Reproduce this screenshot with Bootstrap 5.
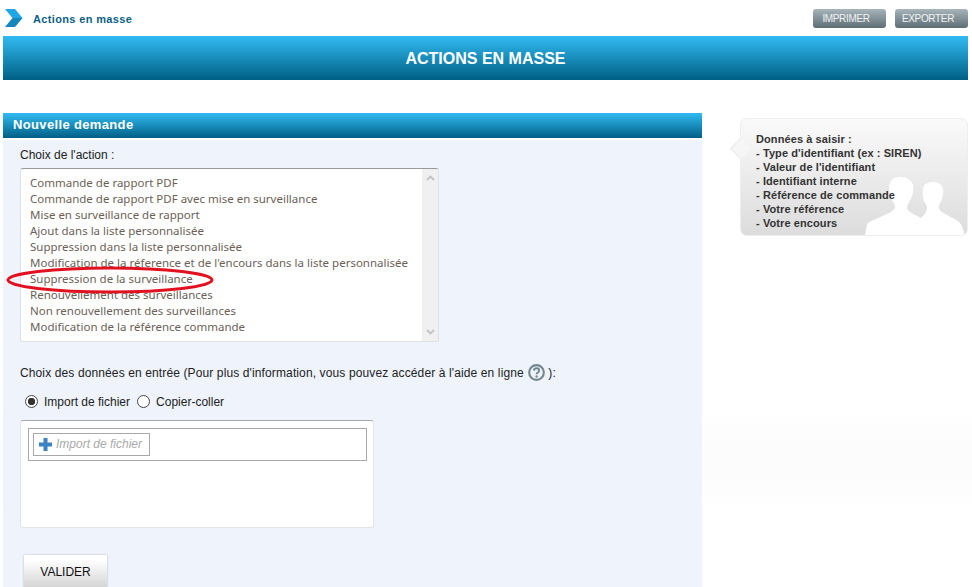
<!DOCTYPE html>
<html lang="fr">
<head>
<meta charset="utf-8">
<title>Actions en masse</title>
<link rel="stylesheet" href="https://cdn.jsdelivr.net/npm/bootstrap@5.3.0/dist/css/bootstrap.min.css">
<style>
html,body{overflow:hidden;height:587px;background:#fff}
body{font-family:"Liberation Sans",Arial,sans-serif;font-size:12px;color:#222;line-height:16px}
.topline{height:36px;padding:0 4px 0 5px}
.crumb{color:#0c5f85;font-size:11px;font-weight:700;margin:2px 0 0 10px;letter-spacing:.35px}
.btnpair{gap:9px}
.printbtn{width:73px;height:19px;padding:1px 7px 0 0;margin-top:1px;border:0;border-radius:3px;background:linear-gradient(#a7b4ba,#5e6d75);color:#f2f4f5;font-size:10px;line-height:18px;letter-spacing:-.35px}
.banner{height:44px;margin:0 4px 0 3px;background:linear-gradient(#31bbf2,#005f85);color:#fff;font-size:16px;font-weight:700;line-height:46px}
.mainrow{margin-top:33px;background:linear-gradient(#fff 292px,#fcfcfc 335px,#fcfcfc 360px,#fff 401px)}
.panel{width:699px;margin-left:3px;height:480px;flex:none}
.paneltitle{height:25px;background:linear-gradient(#31bbf2,#005f85);color:#fff;font-size:13px;font-weight:700;line-height:23px;padding-left:10px;letter-spacing:.35px}
.panelbody{margin-top:2px;background:#eef3fc;height:453px;padding:7px 0 0 17px;position:relative}
.choosebox{width:419px;height:174px;margin-top:5px;background:#fff;border:1px solid #e0e0e0;border-top:1px solid #999;border-radius:3px;overflow:hidden}
.choices{padding:6px 0 0 9px;color:#6b5f57;font-family:"Noto Sans",sans-serif;font-size:11.500px;line-height:16px;white-space:nowrap}
.fakebar{width:16px;background:#f0f0f0;padding:6px 0}
.circlemark{position:absolute;left:2px;top:125px}
.inputlabel{margin-top:22px;color:#222;letter-spacing:.12px}
.helpicon{vertical-align:-4px;margin:0 3px 0 1px}
.radioline{margin:13px 0 0 5px;gap:6px;color:#222;line-height:16px}
.radioline .form-check-input{width:13px;height:13px;margin:-2px 0 0;border:1px solid #444;background-color:#fff;flex:none}
.radioline .form-check-input:checked{background-color:#fff;border-color:#444;background-image:radial-gradient(circle,#333 0,#333 3.4px,transparent 4px)}
.radioline .form-check-input:focus{box-shadow:none}
.radioline .secondradio{margin-left:1px}
.uploadbox{width:354px;height:108px;margin-top:10px;background:#fff;border:1px solid #e4e4e4;border-top:1px solid #aaa;border-radius:3px;padding:7px 6px 8px 7px}
.uploadinner{height:33px;border:1px solid #aaa;padding:4px}
.addfile{height:23px;width:117px;border:1px solid #aaa;color:#aaa;font-style:italic;gap:4px;padding-left:5px;line-height:21px}
.okbtn{width:83px;height:36px;margin:27px 0 0 4px;padding:0 0 2px;border:0;border-radius:0;background:linear-gradient(#fff 15%,#cfcfcf);color:#111;font-size:12px;box-shadow:0 0 2px #bbb}
.infobox{width:228px;height:118px;margin:5px 0 0 38px;padding:13px 15px;border:1px solid #eee;border-radius:7px;background:linear-gradient(#fafafa,#dcdcdc);color:#333;font-size:11px;font-weight:700;line-height:14px;letter-spacing:.09px;position:relative;overflow:visible}
.infotext{position:relative;z-index:1}
.infotail{position:absolute;left:-8px;top:22px;width:15px;height:15px;background:#f6f6f6;transform:rotate(45deg);border-left:1px solid #e8e8e8;border-bottom:1px solid #e8e8e8}
.people{position:absolute;right:1px;bottom:0}
</style>
</head>
<body>
<div class="topline d-flex align-items-center">
  <svg width="18" height="19" viewBox="0 0 18 19" aria-hidden="true"><polygon points="0,0 10,0 17.500,9 7.500,9" fill="#1ea6e6"/><polygon points="7.500,9 17.500,9 10,18 0,18" fill="#1585bd"/></svg>
  <span class="crumb">Actions en masse</span>
  <div class="ms-auto d-flex btnpair">
    <button type="button" class="btn printbtn">IMPRIMER</button>
    <button type="button" class="btn printbtn">EXPORTER</button>
  </div>
</div>
<div class="banner text-center">ACTIONS EN MASSE</div>
<div class="mainrow d-flex align-items-start">
  <section class="panel">
    <div class="paneltitle">Nouvelle demande</div>
    <div class="panelbody">
      <div>Choix de l'action :</div>
      <div class="choosebox d-flex">
        <ul class="choices list-unstyled mb-0 flex-grow-1">
          <li>Commande de rapport PDF</li>
          <li>Commande de rapport PDF avec mise en surveillance</li>
          <li>Mise en surveillance de rapport</li>
          <li>Ajout dans la liste personnalisée</li>
          <li>Suppression dans la liste personnalisée</li>
          <li>Modification de la réference et de l'encours dans la liste personnalisée</li>
          <li>Suppression de la surveillance</li>
          <li>Renouvellement des surveillances</li>
          <li>Non renouvellement des surveillances</li>
          <li>Modification de la référence commande</li>
        </ul>
        <div class="fakebar d-flex flex-column justify-content-between align-items-center">
          <svg width="9" height="6" viewBox="0 0 9 6"><path d="M1 5 4.500 1.500 8 5" fill="none" stroke="#c2c2c2" stroke-width="1.800"/></svg>
          <svg width="9" height="6" viewBox="0 0 9 6"><path d="M1 1 4.500 4.500 8 1" fill="none" stroke="#c2c2c2" stroke-width="1.800"/></svg>
        </div>
      </div>
      <svg class="circlemark" width="210" height="30" viewBox="0 0 210 30" aria-hidden="true"><ellipse cx="105" cy="15" rx="102" ry="12" fill="none" stroke="#e2111f" stroke-width="3"/></svg>
      <div class="inputlabel">Choix des données en entrée (Pour plus d'information, vous pouvez accéder à l'aide en ligne
        <svg class="helpicon" width="17" height="17" viewBox="0 0 16 16" aria-hidden="true"><circle cx="8" cy="8" r="6.900" fill="none" stroke="#74878f" stroke-width="2"/><path d="M5.600 6.200C5.700 4.700 6.800 4 8 4c1.400 0 2.500.8 2.500 2.100 0 1.900-2.400 1.800-2.400 3.600" fill="none" stroke="#74878f" stroke-width="1.800"/><circle cx="8.100" cy="11.800" r="1.100" fill="#74878f"/></svg>):
      </div>
      <div class="radioline d-flex align-items-center">
        <input class="form-check-input" type="radio" name="mode" id="m1" checked>
        <label for="m1">Import de fichier</label>
        <input class="form-check-input secondradio" type="radio" name="mode" id="m2">
        <label for="m2">Copier-coller</label>
      </div>
      <div class="uploadbox">
        <div class="uploadinner">
          <div class="addfile d-flex align-items-center">
            <svg width="13" height="13" viewBox="0 0 13 13" aria-hidden="true"><path d="M4.500 0h4v4.500H13v4H8.500V13h-4V8.500H0v-4h4.500z" fill="#3b82c4"/></svg>
            <span>Import de fichier</span>
          </div>
        </div>
      </div>
      <button type="button" class="btn okbtn">VALIDER</button>
    </div>
  </section>
  <aside class="infobox">
    <span class="infotail"></span>
    <svg class="people" width="106" height="60" viewBox="0 0 106 60" aria-hidden="true">
      <path d="M5 60 7 49C9 46 22 42 31 37 36 34 36 31 33 27 29 22 28 14 30 8 32 3 36 2 41 2 47 2 52 5 53 10 54 17 52 23 48 29 46 32 47 35 50 37 53 39 57 41 61 43 64 40 68 36 67 31 63 26 62 20 63 13 64 9 68 7 73 7 79 7 83 10 83 15 84 21 81 27 79 30 78 33 79 35 82 37 88 41 96 44 99 47 102 50 104 55 104 60Z" fill="#fff"/>
    </svg>
    <div class="infotext">Données à saisir :<br>- Type d'identifiant (ex : SIREN)<br>- Valeur de l'identifiant<br>- Identifiant interne<br>- Référence de commande<br>- Votre référence<br>- Votre encours</div>
  </aside>
</div>
<script src="https://cdn.jsdelivr.net/npm/bootstrap@5.3.0/dist/js/bootstrap.bundle.min.js"></script>
</body>
</html>
